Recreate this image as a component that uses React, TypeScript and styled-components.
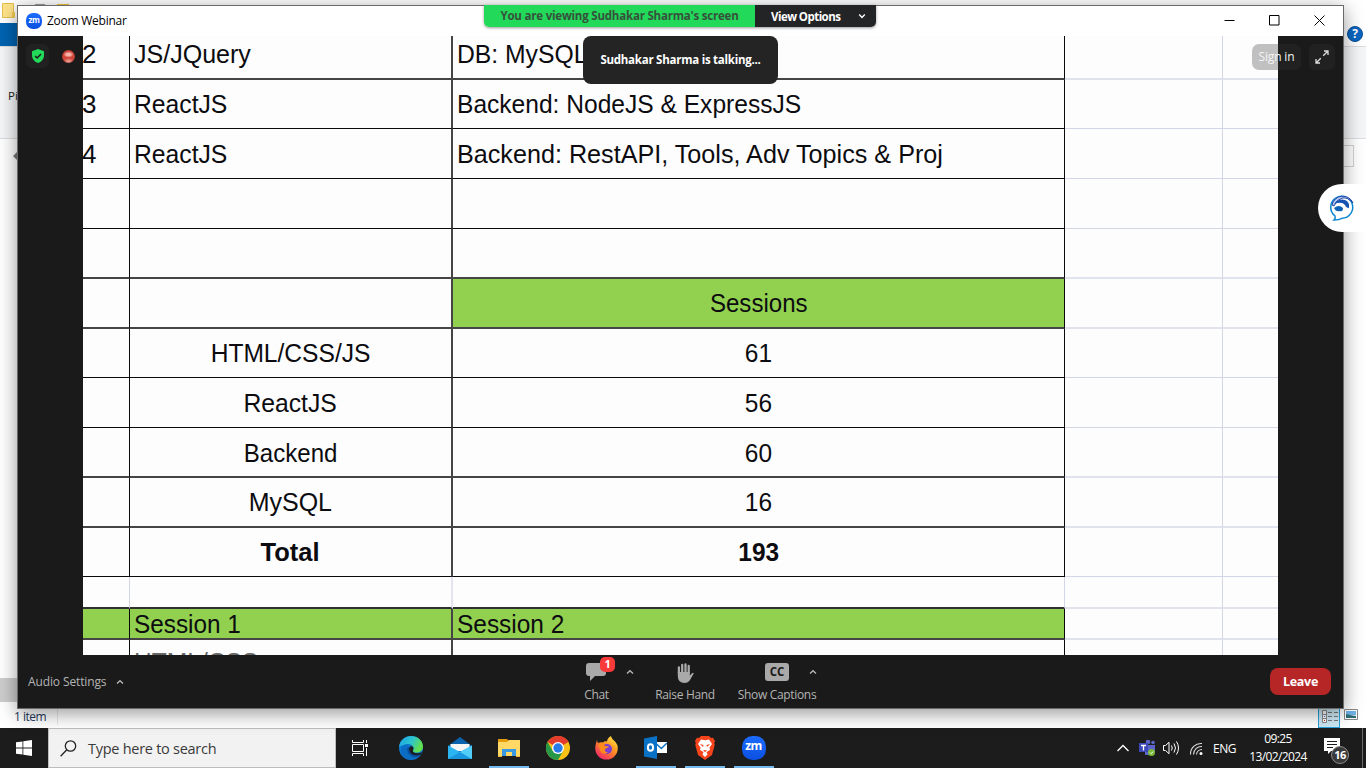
import React from "react";
import styled, { createGlobalStyle, css } from "styled-components";

const Global = createGlobalStyle`
  * { box-sizing: border-box; }
  body { margin: 0; overflow: hidden; font-family: "Open Sans", "Noto Sans", sans-serif; }
  svg { display: block; flex: none; }
`;

const ui = `"Open Sans", "Noto Sans", sans-serif`;

const Desktop = styled.div`
  position: relative;
  width: 1366px;
  height: 768px;
  display: grid;
  grid-template-rows: 728px 40px;
  overflow: hidden;
`;

/* ---------- file explorer behind the meeting ---------- */
const Explorer = styled.div`
  display: flex;
  flex-direction: column;
  background: #fff;
  font-size: 12px;
`;
const ExplorerTitle = styled.div`
  height: 23px;
  display: flex;
  align-items: flex-start;
  padding: 3px 0 0 2px;
`;
const ExplorerTabs = styled.div`
  height: 24px;
  display: flex;
  justify-content: space-between;
  align-items: center;
  border-bottom: 1px solid #dcdde0;
  padding-right: 3px;
`;
const FileTab = styled.div`
  width: 40px;
  height: 23px;
  background: #0063b1;
`;
const HelpBadge = styled.div`
  width: 16px;
  height: 16px;
  margin-top: -2px;
  border-radius: 50%;
  background: #0a66c2;
  border: 1px solid #0a4f96;
  color: #fff;
  font: bold 12px/14px ${ui};
  text-align: center;
`;
const Ribbon = styled.div`
  height: 92px;
  background: #f5f6f7;
  border-bottom: 1px solid #dcdde0;
  padding: 41px 0 0 8px;
  font-size: 11.5px;
  line-height: 16px;
  color: #222;
`;
const AddressBar = styled.div`
  flex: 1;
  display: flex;
  justify-content: space-between;
  align-items: flex-start;
  padding: 6px 12px 0 12px;
`;
const SearchField = styled.div`
  width: 40px;
  height: 22px;
  border: 1px solid #d2d2d2;
`;
const ScrollStub = styled.div`
  width: 40px;
  height: 24px;
  background: #cdcdcd;
`;
const StatusBar = styled.div`
  height: 26px;
  display: flex;
  justify-content: space-between;
  padding: 4px 8px 0 14px;
  font-size: 12px;
  line-height: 22px;
  color: #1e395b;
  letter-spacing: -0.5px;
`;
const ItemCount = styled.span`
  width: 44px;
  height: 19px;
  border-right: 1px solid #e8e8e8;
`;
const ViewModes = styled.div`
  display: flex;
  gap: 4px;
`;
const DetailsMode = styled.div`
  width: 22px;
  height: 22px;
  background: #cce8f4;
  border: 1px solid #26a0da;
  padding: 3px 2px;
`;

/* ---------- meeting window ---------- */
const Window = styled.div`
  position: absolute;
  left: 17px;
  top: 5px;
  width: 1327px;
  height: 704px;
  display: flex;
  flex-direction: column;
  border: 1px solid #6a6a6a;
  background: #1a1a1a;
  box-shadow: 0 4px 18px rgba(0, 0, 0, 0.42);
`;
const TitleBar = styled.div`
  height: 30px;
  background: #fff;
  display: flex;
  align-items: center;
  padding: 0 18px 1px 8px;
`;
const TitleText = styled.span`
  flex: 1;
  margin-left: 5px;
  font-size: 12px;
  letter-spacing: -0.25px;
  color: #000;
`;
const WindowButtons = styled.div`
  display: flex;
  gap: 34px;
`;
const ZoomBadge = styled.div<{ $size: number }>`
  width: ${(p) => p.$size}px;
  height: ${(p) => p.$size}px;
  border-radius: 44%;
  background: linear-gradient(180deg, #1c6cff, #0b4fe0);
  color: #fff;
  font: bold ${(p) => p.$size * 0.5}px / ${(p) => p.$size * 0.87}px ${ui};
  letter-spacing: -0.5px;
  text-align: center;
`;
const Stage = styled.div`
  height: 619px;
  display: flex;
  justify-content: center;
`;
const Side = styled.div<{ $end?: boolean }>`
  width: 65px;
  display: flex;
  align-items: flex-start;
  justify-content: ${(p) => (p.$end ? "flex-end" : "flex-start")};
  padding: 8px;
`;

/* ---------- shared sheet ---------- */
const Sheet = styled.div`
  width: 1195px;
  height: 619px;
  overflow: hidden;
  background: #fdfdfd;
  font-family: "Liberation Sans", Arial, sans-serif;
  font-size: 26px;
  color: #0c0c10;
`;
const SheetRow = styled.div<{ $h: number }>`
  height: ${(p) => p.$h}px;
  display: grid;
  grid-template-columns: 47px 323px 612px 158px 55px;
`;
const Cell = styled.div<{
  $faint?: boolean;
  $fill?: boolean;
  $center?: boolean;
  $bold?: boolean;
  $soft?: boolean;
  $wide?: boolean;
  $lift?: number;
}>`
  display: flex;
  align-items: center;
  justify-content: ${(p) => (p.$center ? "center" : "flex-start")};
  padding: 2px 0 ${(p) => p.$lift ?? 0}px ${(p) => (p.$center ? 0 : 4)}px;
  white-space: nowrap;
  overflow: hidden;
  border-style: solid;
  border-color: ${(p) => (p.$faint ? "#d3d6e6" : "#0a0a0a")};
  border-width: 0 1px ${(p) => (p.$soft ? 2 : 1)}px 0;
  ${(p) => p.$soft && css`border-bottom-color: ${p.$faint ? "#e0e2ee" : "#454545"};`}
  ${(p) => p.$wide && css`border-right: 2px solid ${p.$faint ? "#e4e4f0" : "#454545"};`}
  background: ${(p) => (p.$fill ? "#92d050" : "transparent")};
  background-clip: padding-box;
  font-weight: ${(p) => (p.$bold ? 700 : 400)};
`;
const IndexCell = styled(Cell)`
  padding-left: 0;
  text-indent: -1px;
`;
const LastCell = styled(Cell)`
  border-right: 0;
`;
const HeadingCell = styled(Cell)`
  align-items: flex-start;
  padding-top: 9px;
  color: #666;
  line-height: 26px;
`;
const CellText = styled.span<{ $fit?: number; $center?: boolean }>`
  display: inline-block;
  transform: scaleX(${(p) => p.$fit ?? 1});
  transform-origin: ${(p) => (p.$center ? "center" : "left")};
`;

/* ---------- overlays ---------- */
const ShareBanner = styled.div`
  position: absolute;
  left: 484px;
  top: 5px;
  height: 22px;
  display: flex;
  border-radius: 0 0 5px 5px;
  overflow: hidden;
  box-shadow: 0 1px 3px rgba(0, 0, 0, 0.4);
  font: bold 11.5px/21px ${ui};
`;
const Viewing = styled.div`
  width: 271px;
  background: #23d959;
  color: #35513c;
  text-align: center;
  letter-spacing: -0.2px;
`;
const ViewOptions = styled.div`
  width: 121px;
  background: #232425;
  color: #fff;
  display: flex;
  align-items: center;
  justify-content: space-between;
  padding: 0 10px 0 16px;
  letter-spacing: -0.55px;
`;
const Talking = styled.div`
  position: absolute;
  left: 583px;
  top: 36px;
  width: 195px;
  height: 48px;
  border-radius: 8px;
  background: #242424;
  color: #fff;
  text-align: center;
  font: bold 11.5px/48px ${ui};
  letter-spacing: -0.25px;
`;
const SignIn = styled.div`
  position: absolute;
  left: 1252px;
  top: 44px;
  width: 49px;
  height: 26px;
  border-radius: 7px;
  background: linear-gradient(90deg, #c0c0c1 26px, #212121 26px);
  color: #f4f4f4;
  text-align: center;
  font: 12px/25px ${ui};
  letter-spacing: -0.15px;
`;
const Tile = styled.div<{ $size: number }>`
  width: ${(p) => p.$size}px;
  height: ${(p) => p.$size}px;
  border-radius: 6px;
  background: #212121;
  display: flex;
  align-items: center;
  justify-content: center;
`;
const Recording = styled.div`
  width: 13px;
  height: 13px;
  margin: 6px 0 0 13px;
  border-radius: 50%;
  background: radial-gradient(ellipse 5px 3px at 50% 35%, #f3b3a8 0 45%, transparent 100%),
    radial-gradient(ellipse 5px 3px at 50% 85%, #e9a79c, transparent 100%),
    radial-gradient(circle, #d2453a 55%, #5a2622 100%);
`;
const SideBubble = styled.div`
  position: absolute;
  left: 1318px;
  top: 184px;
  width: 48px;
  height: 48px;
  border-radius: 24px 0 0 24px;
  background: #fff;
  padding: 10px 0 0 11px;
`;

/* ---------- meeting controls ---------- */
const Controls = styled.div`
  height: 53px;
  display: grid;
  grid-template-columns: 539px 260px 1fr;
  align-items: center;
  padding: 0 12px 0 10px;
  color: #b4b4b4;
  font-size: 12px;
`;
const AudioSettings = styled.div`
  display: flex;
  align-items: center;
  gap: 10px;
  letter-spacing: -0.12px;
`;
const ControlGroup = styled.div`
  display: flex;
  height: 53px;
  align-items: flex-start;
`;
const Control = styled.div<{ $w: number }>`
  width: ${(p) => p.$w}px;
  flex: none;
  display: flex;
  flex-direction: column;
  align-items: center;
  padding-top: 8px;
  line-height: 16px;
  letter-spacing: -0.32px;
  white-space: nowrap;
`;
const ControlIcon = styled.div`
  position: relative;
  height: 24px;
`;
const Count = styled.div`
  position: absolute;
  left: 14px;
  top: -6px;
  width: 15px;
  height: 15px;
  border-radius: 5px;
  background: #f93a3a;
  color: #fff;
  font: bold 11px/14px ${ui};
  text-align: center;
`;
const Caption = styled.div`
  width: 24px;
  height: 18px;
  border-radius: 3px;
  background: #a9a9a9;
  color: #1a1a1a;
  font: bold 11.5px/18px ${ui};
  letter-spacing: 0;
  text-align: center;
`;
const Caret = styled.div<{ $tuck?: boolean }>`
  padding-top: 13px;
  width: 8px;
  flex: none;
  margin-left: ${(p) => (p.$tuck ? -9 : 0)}px;
`;
const Leave = styled.button`
  justify-self: end;
  width: 61px;
  height: 27px;
  border: 0;
  padding: 0 0 1px;
  border-radius: 8px;
  background: #b72626;
  color: #fff;
  font: bold 12.5px ${ui};
  letter-spacing: -0.3px;
`;

/* ---------- taskbar ---------- */
const Taskbar = styled.div`
  display: flex;
  background: #1c1c1c;
  color: #fff;
  font-size: 12px;
`;
const Start = styled.div`
  width: 48px;
  display: flex;
  align-items: center;
  justify-content: center;
`;
const Search = styled.div`
  width: 288px;
  background: #f2f2f2;
  border: 1px solid #bdbdbd;
  display: flex;
  align-items: center;
  gap: 11px;
  padding-left: 11px;
  color: #3a3a3a;
  font-size: 14.5px;
  letter-spacing: -0.27px;
`;
const AppButton = styled.div<{ $open?: boolean }>`
  width: 49px;
  display: flex;
  align-items: center;
  justify-content: center;
  padding-bottom: 1px;
  ${(p) =>
    p.$open &&
    css`
      background: linear-gradient(#76b9ed, #76b9ed) 50% 38px / 40px 2px no-repeat;
    `}
`;
const TaskView = styled(AppButton)`
  width: 50px;
  padding-right: 2px;
`;
const Tray = styled.div`
  margin-left: auto;
  display: flex;
  align-items: center;
`;
const Lang = styled.span`
  width: 24px;
  margin-left: 9px;
  letter-spacing: -0.5px;
`;
const Clock = styled.div`
  width: 62px;
  margin-left: 10px;
  text-align: center;
  line-height: 18px;
  letter-spacing: -0.6px;
  white-space: nowrap;
`;
const Notices = styled.div`
  position: relative;
  width: 26px;
  height: 26px;
  margin: 5px 12px 0 15px;
`;
const NoticeCount = styled.div`
  position: absolute;
  left: 7px;
  top: 8px;
  width: 18px;
  height: 18px;
  border-radius: 50%;
  background: #3a3a3a;
  border: 1px solid #8a8a8a;
  font: bold 11px/15px ${ui};
  letter-spacing: -0.5px;
  text-align: center;
`;
const PeekEdge = styled.div`
  width: 4px;
  height: 40px;
  border-left: 1px solid #6a6a6a;
`;

const Chevron = ({ up, color = "#b4b4b4" }: { up?: boolean; color?: string }) => (
  <svg width="8" height="8" viewBox="0 0 8 8">
    <path d={up ? "M1 5.6 4 2.7 7 5.6" : "M1.2 2.6 4 5.4 6.8 2.6"} fill="none" stroke={color} strokeWidth="1.4" />
  </svg>
);

type RowData = {
  h: number;
  kind: "left" | "sum" | "head" | "total" | "gap" | "session" | "cut";
  soft?: boolean;
  lift?: number;
  idx?: string;
  a?: string;
  af?: number;
  b?: string;
  bf?: number;
};
const rows: RowData[] = [
  { h: 44, kind: "left", soft: true, lift: 7, idx: "2", a: "JS/JQuery", af: 0.963, b: "DB: MySQL", bf: 0.95 },
  { h: 49, kind: "left", lift: 2, idx: "3", a: "ReactJS", af: 0.95, b: "Backend: NodeJS & ExpressJS", bf: 0.945 },
  { h: 50, kind: "left", idx: "4", a: "ReactJS", af: 0.95, b: "Backend: RestAPI, Tools, Adv Topics & Proj", bf: 0.968 },
  { h: 50, kind: "left" },
  { h: 50, kind: "left", soft: true },
  { h: 50, kind: "head", soft: true, lift: 2, b: "Sessions", bf: 0.925 },
  { h: 49, kind: "sum", lift: 2, a: "HTML/CSS/JS", af: 0.945, b: "61", bf: 0.94 },
  { h: 50, kind: "sum", a: "ReactJS", af: 0.95, b: "56", bf: 0.94 },
  { h: 50, kind: "sum", soft: true, a: "Backend", af: 0.925, b: "60", bf: 0.94 },
  { h: 50, kind: "sum", soft: true, lift: 2, a: "MySQL", af: 0.96, b: "16", bf: 0.94 },
  { h: 49, kind: "total", lift: 2, a: "Total", af: 0.98, b: "193", bf: 0.94 },
  { h: 32, kind: "gap", soft: true },
  { h: 31, kind: "session", soft: true, a: "Session 1", af: 0.935, b: "Session 2", bf: 0.94 },
  { h: 60, kind: "cut", a: "HTML/CSS", af: 0.945 },
];

/* The spacer row keeps faint column rules but closes with the dark rule of the row below. */
const GapCell = styled(Cell)`
  border-bottom-color: #303030;
`;

const SheetLine = ({ r }: { r: RowData }) => {
  const center = r.kind === "sum" || r.kind === "head" || r.kind === "total";
  const fill = r.kind === "session";
  const bold = r.kind === "total";
  const margin = (
    <>
      <Cell $faint $soft={r.soft} />
      <LastCell $faint $soft={r.soft} />
    </>
  );
  if (r.kind === "gap") {
    return (
      <SheetRow $h={r.h}>
        <GapCell $faint $soft />
        <GapCell $faint $soft $wide />
        <GapCell $faint $soft />
        {margin}
      </SheetRow>
    );
  }
  const First = r.kind === "cut" ? HeadingCell : Cell;
  return (
    <SheetRow $h={r.h}>
      <IndexCell $fill={fill} $soft={r.soft} $lift={r.lift}>{r.idx}</IndexCell>
      <First $fill={fill} $soft={r.soft} $lift={r.lift} $center={center} $bold={bold} $wide>
        <CellText $fit={r.af} $center={center}>{r.a}</CellText>
      </First>
      <Cell $fill={fill || r.kind === "head"} $soft={r.soft} $lift={r.lift} $center={center} $bold={bold}>
        <CellText $fit={r.bf} $center={center}>{r.b}</CellText>
      </Cell>
      {margin}
    </SheetRow>
  );
};

const EdgeIcon = () => (
  <svg width="24" height="24" viewBox="0 0 24 24">
    <defs>
      <linearGradient id="edgeTop" x1="0" x2="1" y1="0" y2=".4"><stop offset="0" stopColor="#1a9fe6" /><stop offset=".55" stopColor="#2cc5cf" /><stop offset="1" stopColor="#62e04c" /></linearGradient>
    </defs>
    <circle cx="12" cy="12" r="12" fill="#0c78cf" />
    <path d="M0 11C1 4 6 0 12 0c7 0 12 5 12 10.500 0 4-3 6-6.500 6-3 0-4.500-1.200-3.500-2.500 1.500-2 0-6-5-6-4 0-7.500 2-9 3z" fill="url(#edgeTop)" />
    <path d="M8 12c-1 7 5 11 11 9-7 5-17 2-17-6 0-5 5-7 9-6-2 .6-3 1.600-3 3z" fill="#0b6cc4" />
    <path d="M8.300 11.500C7 18 13 23 20 20.500l2.500-3c-4 2-9 1-9-2.500 0-2-3-5.500-5.200-3.500z" fill="#0c4e9e" />
    <path d="M10.500 11.500c.8-1.800 3.500-1.600 4 .6.300 1.600-1.300 2.400-.4 3.600 1.600 2 6 2 8.900.3l-1 2.500c-4 1.700-9.500.8-11.200-3-.6-1.400-.8-2.800-.3-4z" fill="#1c1c1c" />
  </svg>
);
const MailIcon = () => (
  <svg width="24" height="24" viewBox="0 0 24 24">
    <path d="M0 10 12 1l12 9v13H0z" fill="#0b62ad" />
    <path d="M2.500 8h19v7h-19z" fill="#f5f5f5" />
    <path d="M0 9.500 12 16 24 9.500V23H0z" fill="#2bb5f0" />
    <path d="M0 23 12 16l12 7z" fill="#1996de" />
    <path d="M12 16 24 9.500V23z" fill="#52cdf8" />
  </svg>
);
const FolderIcon = () => (
  <svg width="22" height="20" viewBox="0 0 22 20">
    <path d="M0 1h9l2 2h10v7H0z" fill="#e59c0a" />
    <path d="M0 4h9l2-2h11v16H0z" fill="#ffd866" />
    <path d="M4 18v-7h14v7h-4v-4H8v4z" fill="#3898e0" />
    <path d="M0 18h4v1H0zM18 18h4v1h-4z" fill="#e9b53a" />
  </svg>
);
const ChromeIcon = () => (
  <svg width="24" height="24" viewBox="0 0 24 24">
    <circle cx="12" cy="12" r="12" fill="#fbc116" />
    <path d="M12 12 1.600 6a12 12 0 0 1 20.800 0z" fill="#e33b2e" />
    <path d="M12 0a12 12 0 0 1 10.400 6H12z" fill="#e33b2e" />
    <path d="M1.600 6A12 12 0 0 0 12 24l5.200-9L12 12 6.800 15z" fill="#279847" />
    <circle cx="12" cy="12" r="6" fill="#fff" />
    <circle cx="12" cy="12" r="4.700" fill="#2a7bea" />
  </svg>
);
const FirefoxIcon = () => (
  <svg width="23" height="24" viewBox="0 0 23 24">
    <defs><linearGradient id="fox" x1=".9" x2=".2" y1="0" y2="1"><stop offset="0" stopColor="#fff04a" /><stop offset=".45" stopColor="#ff9120" /><stop offset="1" stopColor="#f2206d" /></linearGradient></defs>
    <path d="M2 4c0 1 .3 2 1 3 2-1 4-1 5-.5C9 5 11 5 12 5.500 12 3 14 1 16 0c0 3 5 5 6.500 9.500C24 17 19 23.500 11.500 23.500 4 23.500-1 17 .5 9.500 1 7 1.500 5 2 4z" fill="url(#fox)" />
    <circle cx="12" cy="13" r="5" fill="#7a3fd0" />
    <path d="M3 9c3-2 6-1 7 1l4 .6c-1 1.800-3 1.400-4 2.600-.5 2 1 3.300 3 3-3 3-8 1-8-3z" fill="#ff8a1c" />
  </svg>
);
const OutlookIcon = () => (
  <svg width="23" height="23" viewBox="0 0 23 23">
    <path d="M12 6h11v11H12z" fill="#fff" />
    <path d="m12.500 8 4.800 4.500L23 7" fill="none" stroke="#0a72c6" strokeWidth="1.500" />
    <path d="M0 2.500 13 0v23L0 20.500z" fill="#0a72c6" />
    <ellipse cx="6.500" cy="11.500" rx="2.600" ry="3.300" fill="none" stroke="#fff" strokeWidth="2" />
  </svg>
);
const BraveIcon = () => (
  <svg width="20" height="24" viewBox="0 0 20 24">
    <path d="M6 0h8l2 2 2-.3L20 5l-.8 2 .5 2-2.700 10L10 24l-7-5L.3 9l.5-2L0 5l2-3.300L4 2z" fill="#f5441c" />
    <path d="m6 3.500 4 .8 4-.8 3 4.500-2.500 3.500.5 2.500-3.500 2 1 2.500L10 21l-2.500-2.500 1-2.500L5 14l.5-2.500L3 8z" fill="#fff" />
    <path d="m5 8 3.500 1-.5 2zm10 0-3.500 1 .5 2zM8 14.500l2-.6 2 .6-2 1.500z" fill="#f5441c" />
  </svg>
);

export default function App() {
  return (
    <Desktop>
      <Global />
      <Explorer>
        <ExplorerTitle>
          <svg width="70" height="16" viewBox="0 0 70 16">
            <path d="M.5.5h11v14H.5z" fill="#ffe48a" stroke="#e5c04d" />
            <path d="M10 9h3v6h-3z" fill="#f4cc52" />
            <path d="M33 1h10v8H33z" fill="#999" /><path d="M55 1h12v6H55z" fill="#f1c63a" />
          </svg>
        </ExplorerTitle>
        <ExplorerTabs><FileTab /><HelpBadge>?</HelpBadge></ExplorerTabs>
        <Ribbon>Pi</Ribbon>
        <AddressBar>
          <svg width="10" height="20" viewBox="0 0 10 20"><path d="M1 11 6 6v3h4v4H6v3z" fill="#777" /></svg>
          <SearchField />
        </AddressBar>
        <ScrollStub />
        <StatusBar>
          <ItemCount>1 item</ItemCount>
          <ViewModes>
            <DetailsMode>
              <svg width="17" height="15" viewBox="0 0 17 15">
                <path d="M1.500.5h4v4h-4zm0 4h4v4h-4zm0 4h4v4h-4z" fill="#fff" stroke="#888" />
                <path d="M7 2.500h4m2 0h4m-10 4h4m2 0h4m-10 4h4m2 0h4" stroke="#777" />
                <path d="M3 6h1v1H3z" fill="#36c" /><path d="M3 10h1v1H3z" fill="#c22" />
              </svg>
            </DetailsMode>
            <svg width="14" height="15" viewBox="0 0 14 15">
              <path d="M.5 3.500h13v10H.5z" fill="#fff" stroke="#888" />
              <path d="M2 5h10v4H2z" fill="#6fb3ea" /><path d="M2 8l4 1 6 1v2H2z" fill="#2f6f78" />
            </svg>
          </ViewModes>
        </StatusBar>
      </Explorer>

      <Taskbar>
        <Start>
          <svg width="16" height="16" viewBox="0 0 16 16"><path d="M0 2.300 6.500 1.400v6.200H0zM7.300 1.300 16 0v7.600H7.300zM0 8.400h6.500v6.200L0 13.700zM7.300 8.400H16V16l-8.700-1.300z" fill="#fff" /></svg>
        </Start>
        <Search>
          <svg width="17" height="17" viewBox="0 0 17 17"><circle cx="10.500" cy="6" r="5.200" fill="none" stroke="#222" strokeWidth="1.300" /><path d="M6.800 9.800.6 16.200" stroke="#222" strokeWidth="1.300" /></svg>
          Type here to search
        </Search>
        <TaskView>
          <svg width="17" height="16" viewBox="0 0 17 16"><path d="M.5 0v2.500h11V0M.5 4.500h11v7H.5zM.5 16v-2.500h11V16M14.500 0v3M14.500 8v8" fill="none" stroke="#fff" /><path d="M13 4h3v3h-3z" fill="#fff" /></svg>
        </TaskView>
        <AppButton><EdgeIcon /></AppButton>
        <AppButton><MailIcon /></AppButton>
        <AppButton $open><FolderIcon /></AppButton>
        <AppButton><ChromeIcon /></AppButton>
        <AppButton><FirefoxIcon /></AppButton>
        <AppButton $open><OutlookIcon /></AppButton>
        <AppButton $open><BraveIcon /></AppButton>
        <AppButton $open><ZoomBadge $size={24}>zm</ZoomBadge></AppButton>
        <Tray>
          <svg width="87" height="20" viewBox="0 0 87 20">
            <path d="M.5 13 6 7.500l5.500 5.500" fill="none" stroke="#fff" strokeWidth="1.300" />
            <circle cx="31" cy="4" r="2.300" fill="#5b64c8" /><circle cx="36" cy="4.500" r="1.800" fill="#5b64c8" />
            <path d="M28 7h10v7h-3v3h-7z" fill="#5b64c8" />
            <path d="M22 5h9v9h-9z" fill="#3c47b8" /><path d="M24 7.500h5M26.500 7.500v5" stroke="#fff" strokeWidth="1.300" />
            <circle cx="34.500" cy="14.500" r="3.500" fill="#7ab83a" /><path d="m33 14.500 1.200 1.200 2-2.200" stroke="#fff" fill="none" />
            <path d="M46.500 7.500h2l3.500-3.200v11.400l-3.500-3.200h-2z" fill="none" stroke="#fff" /><path d="M54.500 7.500q1.500 2.500 0 5M57 5.500q3 4.500 0 9M59.500 3.500q4 6.500 0 13" fill="none" stroke="#fff" />
            <path d="M73.500 16.500A10.500 10.500 0 0 1 85 5.500M76.500 16.500A8 8 0 0 1 85 8.500M79.500 16.500A5.500 5.500 0 0 1 85 11.500" fill="none" stroke="#ddd" strokeWidth="1.100" /><circle cx="84" cy="15.500" r="1.500" fill="#fff" />
          </svg>
          <Lang>ENG</Lang>
          <Clock>09:25<br />13/02/2024</Clock>
          <Notices>
            <svg width="17" height="16" viewBox="0 0 17 16"><path d="M0 0h16v13H7l-3 3v-3H0z" fill="#fff" /><path d="M3 3.500h10M3 6.500h10M3 9.500h6" stroke="#1c1c1c" /></svg>
            <NoticeCount>16</NoticeCount>
          </Notices>
          <PeekEdge />
        </Tray>
      </Taskbar>

      <Window>
        <TitleBar>
          <ZoomBadge $size={16}>zm</ZoomBadge>
          <TitleText>Zoom Webinar</TitleText>
          <WindowButtons>
            <svg width="11" height="11" viewBox="0 0 11 11"><path d="M.5 5.500h10" stroke="#000" /></svg>
            <svg width="11" height="11" viewBox="0 0 11 11"><path d="M.5.5h9.500v9.500H.5z" fill="none" stroke="#000" /></svg>
            <svg width="11" height="11" viewBox="0 0 11 11"><path d="m.5.5 10 10m0-10-10 10" stroke="#000" /></svg>
          </WindowButtons>
        </TitleBar>
        <Stage>
          <Side>
            <Tile $size={24}>
              <svg width="14" height="14" viewBox="0 0 14 14"><path d="M7 0 13 2.300v4C13 10.500 10 13 7 14 4 13 1 10.500 1 6.300v-4z" fill="#23d959" /><path d="m4.200 7 2 2 3.800-4" fill="none" stroke="#1a1a1a" strokeWidth="1.500" /></svg>
            </Tile>
            <Recording />
          </Side>
          <Sheet>{rows.map((r, i) => <SheetLine key={i} r={r} />)}</Sheet>
          <Side $end>
            <Tile $size={26}>
              <svg width="14" height="14" viewBox="0 0 14 14"><path d="M8.200 5.800 13 1M9 1h4v4M5.800 8.200 1 13M1 9v4h4" fill="none" stroke="#ddd" strokeWidth="1.300" /></svg>
            </Tile>
          </Side>
        </Stage>
        <Controls>
          <AudioSettings>Audio Settings <Chevron up /></AudioSettings>
          <ControlGroup>
            <Control $w={59}>
              <ControlIcon>
                <svg width="21" height="19" viewBox="0 0 21 19"><path d="M3 0h14q3 0 3 3v7q0 3-3 3h-8l-5 5v-5H3q-3 0-3-3V3q0-3 3-3z" fill="#a9a9a9" /></svg>
                <Count>1</Count>
              </ControlIcon>
              Chat
            </Control>
            <Caret><Chevron up /></Caret>
            <Control $w={102}>
              <ControlIcon>
                <svg width="17" height="20" viewBox="0 0 17 20"><path d="M1.900 10V4.300M5.200 9V2M8.500 9V1.300M11.700 10V3" stroke="#a9a9a9" strokeWidth="2.300" strokeLinecap="round" /><path d="M.8 9h12v3.500l2.200-2.300q1.500-.8 1.700.3L13 17q-1.800 3-5.500 3Q.8 20 .8 13z" fill="#a9a9a9" /></svg>
              </ControlIcon>
              Raise Hand
            </Control>
            <Control $w={82}>
              <ControlIcon><Caption>CC</Caption></ControlIcon>
              Show Captions
            </Control>
            <Caret $tuck><Chevron up /></Caret>
          </ControlGroup>
          <Leave>Leave</Leave>
        </Controls>
      </Window>

      <ShareBanner>
        <Viewing>You are viewing Sudhakar Sharma's screen</Viewing>
        <ViewOptions>View Options <Chevron color="#fff" /></ViewOptions>
      </ShareBanner>
      <Talking>Sudhakar Sharma is talking...</Talking>
      <SignIn>Sign in</SignIn>
      <SideBubble>
        <svg width="27" height="28" viewBox="-1 0 27 28">
          <path d="M5 22A11 11 0 1 1 12 24.300Q9 26 4 26q2-2 1-4z" fill="#fff" stroke="#0b86cf" strokeWidth="1.500" />
          <path d="M2 11A11 11 0 0 1 23 9q-5-6-11-5-6 2-8 8z" fill="#b9c8ec" stroke="#1a43a8" />
          <path d="M4 10q5-6 11-4 5 2 4 8-3 0-4-3-3-4-11-1z" fill="#1554b0" />
          <path d="M4 14q5-4 9 0 0 4-3 3-4 1-6-3z" fill="#0d63b5" />
        </svg>
      </SideBubble>
    </Desktop>
  );
}
